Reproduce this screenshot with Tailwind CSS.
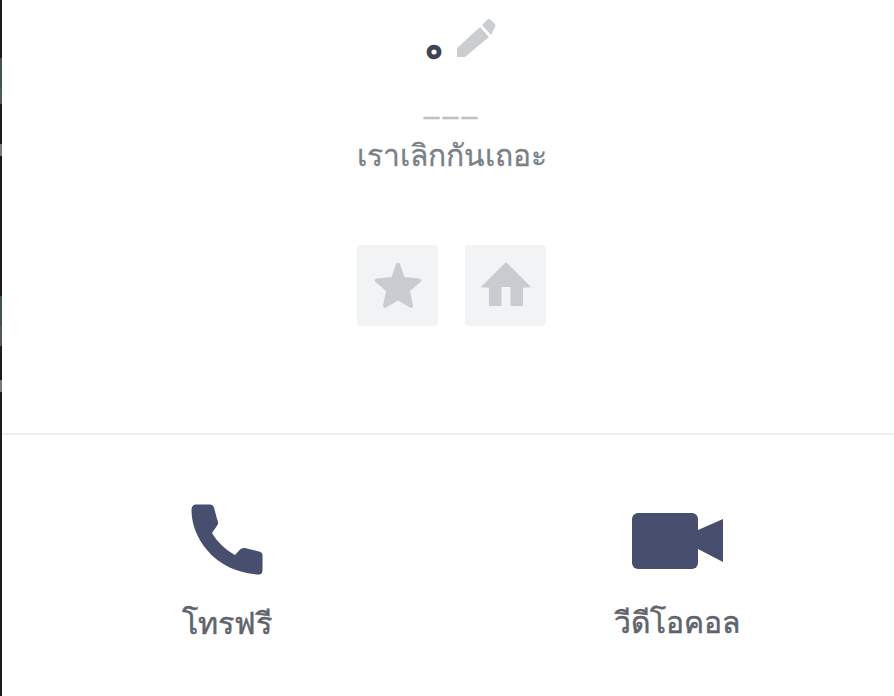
<!DOCTYPE html>
<html lang="th">
<head>
    <meta charset="UTF-8">
    <title>โปรไฟล์</title>
    <script src="https://cdn.jsdelivr.net/npm/@tailwindcss/browser@4"></script>
</head>
<body class="bg-white overflow-hidden font-['Noto_Sans','Noto_Sans_CJK_SC',sans-serif]">
    <div class="flex w-[894px] h-[696px]">
        <!-- edge of the window behind -->
        <div class="w-[2px] shrink-0 flex flex-col bg-[#1c1c1e]">
            <div class="h-[58px]"></div>
            <div class="h-[30px] bg-[#3d5552]"></div>
            <div class="h-[16px] bg-[#55595a]"></div>
            <div class="h-[40px]"></div>
            <div class="h-[12px] bg-[#77797a]"></div>
            <div class="h-[140px]"></div>
            <div class="h-[30px] bg-[#3d5552]"></div>
            <div class="h-[20px] bg-[#55595a]"></div>
            <div class="h-[34px]"></div>
            <div class="h-[12px] bg-[#77797a]"></div>
            <div class="grow"></div>
        </div>

        <div class="grow flex flex-col">
            <!-- profile -->
            <div class="h-[433px] shrink-0 flex flex-col items-center pl-[7px]">
                <div class="h-[64px] flex items-end justify-center gap-[14px] pl-[19px]">
                    <span class="text-[26px] leading-[26px] mb-[3px] text-[#3f4452] [-webkit-text-stroke:2.5px_#3f4452]">๐</span>
                    <svg class="w-[40px] h-[40px] mb-[6px]" viewBox="0 0 40 40">
                        <path d="M1 30 L24 9 L33 19 L9 39 L1 39 Z" fill="#cbced1"/>
                        <path d="M26 7 L31.500 1.500 Q33 0.500 34.500 1.500 L39 6 Q40 7.500 39 9 L35 17 Z" fill="#cbced1"/>
                    </svg>
                </div>
                <div class="mt-[43px] h-[20px] flex items-center">
                    <span class="text-[17px] leading-[20px] font-bold text-[#bdc0c4] tracking-[2px] [-webkit-text-stroke:0.4px_#bdc0c4]">———</span>
                </div>
                <div class="mt-[10px] text-[30px] leading-[36px] text-[#7b7f88] [-webkit-text-stroke:0.3px_#7b7f88]">เราเลิกกันเถอะ</div>
                <div class="mt-[72px] flex gap-[27px]">
                    <button class="w-[81px] h-[81px] rounded-[4px] bg-[#f2f3f5] flex items-center justify-center">
                        <svg class="w-[48px] h-[48px] mb-[2px]" viewBox="0 0 48 48">
                            <path d="M24 1.500 Q25.500 1.500 26 3 L30.500 16 L45 17.500 Q48 18 47 20.500 L36 30 L39 44.500 Q39 47.500 36 46.500 L24 39.500 L12 46.500 Q9 47.500 9 44.500 L12 30 L1 20.500 Q0 18 3 17.500 L17.500 16 L22 3 Q22.500 1.500 24 1.500 Z" fill="#c8ccd0"/>
                        </svg>
                    </button>
                    <button class="w-[81px] h-[81px] rounded-[4px] bg-[#f2f3f5] flex items-center justify-center">
                        <svg class="w-[50px] h-[46px] mb-[3px]" viewBox="0 0 50 46">
                            <path d="M25 1 L49.500 25.500 Q50 26.500 49 26.500 L42 26.500 L42 45 L29.500 45 L29.500 26 L20.500 26 L20.500 45 L8 45 L8 26.500 L1 26.500 Q0 26.500 0.500 25.500 Z" fill="#c8ccd0"/>
                        </svg>
                    </button>
                </div>
            </div>

            <div class="h-[2px] bg-[#eceef0]"></div>

            <!-- call actions -->
            <div class="grow flex">
                <button class="w-[448px] flex flex-col items-center pt-[69px] pl-[2px]">
                    <svg class="w-[74px] h-[72px]" viewBox="0 0 74 72">
                        <path d="M1.500 6 Q1.500 0.500 6 0.500 L20 0.500 Q23 0.500 24 3.500 L27 15 Q28.500 18 28 20 Q27 22 24 26 L22 29 C27 38 36 46 45 51 L50 45.500 Q52 43.500 55 44 L69 47.500 Q72.500 48.500 72.500 51 L72.500 66 Q72.500 71 68 70.500 C50 69.500 30 62 17 46 C7 34 1.500 20 1.500 6 Z" fill="#474e6e"/>
                    </svg>
                    <span class="mt-[26px] text-[30.5px] leading-[40px] font-medium text-[#5f636c] [-webkit-text-stroke:0.5px_#5f636c]">โทรฟรี</span>
                </button>
                <button class="grow flex flex-col items-center pt-[69px] pl-[10px]">
                    <svg class="w-[92px] h-[72px]" viewBox="0 0 92 72">
                        <rect x="1" y="9" width="66" height="56" rx="6" fill="#474e6e"/>
                        <path d="M67 26 L92 15 L92 58 L67 45 Z" fill="#474e6e"/>
                    </svg>
                    <span class="mt-[26px] text-[30px] leading-[40px] font-medium text-[#5f636c] [-webkit-text-stroke:0.5px_#5f636c]">วีดีโอคอล</span>
                </button>
            </div>
        </div>
    </div>
</body>
</html>
